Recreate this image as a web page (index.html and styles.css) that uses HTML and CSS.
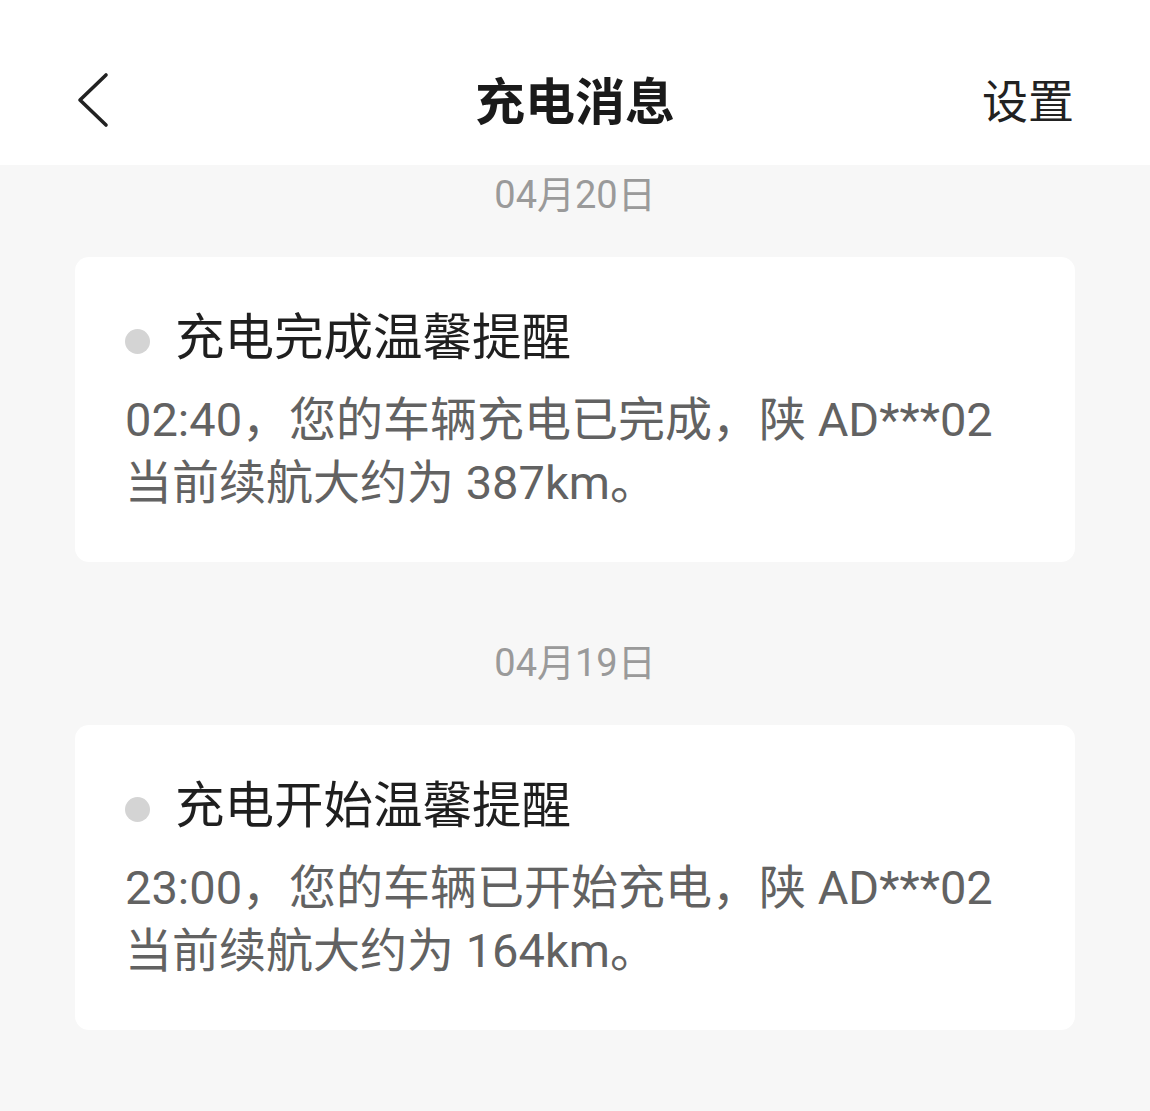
FILE: index.html
```html
<!DOCTYPE html>
<html lang="zh-CN">
  <head>
    <meta charset="UTF-8" />
    <meta name="viewport" content="width=device-width, initial-scale=1.0" />
    <title>充电消息</title>
    <link rel="stylesheet" href="styles.css">
  </head>
  <body>
    <div class="header">
      <div class="back">
        <svg width="34" height="56" viewBox="0 0 34 56">
          <path d="M30 3 L4 28 L30 53" fill="none" stroke="#222" stroke-width="3.6" stroke-linecap="round" stroke-linejoin="round" />
        </svg>
      </div>
      <div class="title">充电消息</div>
      <div class="settings">设置</div>
    </div>

    <div class="list">
      <div class="date">04月20日</div>
      <div class="card">
        <div class="card-title"><span class="dot"></span>充电完成温馨提醒</div>
        <div class="card-body">02:40，您的车辆充电已完成，陕 AD***02<br>当前续航大约为 387km。</div>
      </div>

      <div class="date">04月19日</div>
      <div class="card">
        <div class="card-title"><span class="dot"></span>充电开始温馨提醒</div>
        <div class="card-body">23:00，您的车辆已开始充电，陕 AD***02<br>当前续航大约为 164km。</div>
      </div>
    </div>
  </body>
</html>
```

FILE: styles.css
```css
* {
  box-sizing: border-box;
}
body {
  margin: 0;
  background-color: #f7f7f7;
  font-family: Roboto, "Noto Sans CJK SC", sans-serif;
  color: #1f1f1f;
}

.header {
  display: grid;
  grid-template-columns: 1fr auto 1fr;
  align-items: center;
  height: 165px;
  padding: 31px 76px 0 76px;
  background: #fff;
}

.back {
  display: flex;
  align-items: center;
  margin-top: 4px;
}

.title {
  font-size: 50px;
  font-weight: bold;
  color: #1a1a1a;
}

.settings {
  justify-self: end;
  font-size: 46px;
  color: #222;
}

.list {
  padding: 0 75px;
}

.date {
  height: 60px;
  line-height: 60px;
  margin-bottom: 32px;
  text-align: center;
  font-size: 38px;
  color: #9a9a9a;
}

.card {
  background: #fff;
  border-radius: 14px;
  padding: 46px 40px 48px 50px;
  margin-bottom: 71px;
}

.card-title {
  display: flex;
  align-items: center;
  height: 60px;
  font-size: 49.5px;
  color: #1f1f1f;
}

.dot {
  width: 25px;
  height: 25px;
  border-radius: 50%;
  background: #d4d4d4;
  margin-right: 25px;
  margin-top: 16px;
}

.card-body {
  margin-top: 25px;
  font-size: 47px;
  line-height: 63px;
  color: #626262;
}
```
